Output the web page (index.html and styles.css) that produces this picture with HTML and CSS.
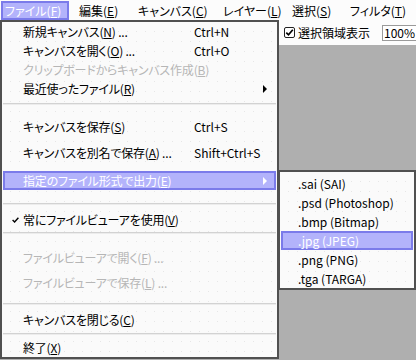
FILE: index.html
```html
<!DOCTYPE html>
<html lang="ja">
<head>
<meta charset="utf-8">
<title>SAI File Menu</title>
<link rel="stylesheet" href="styles.css">
</head>
<body>
<div class="app">
  <nav class="menubar">
    <span class="mb-item active">ファイル(<u>F</u>)</span>
    <span class="mb-item">編集(<u>E</u>)</span>
    <span class="mb-item">キャンバス(<u>C</u>)</span>
    <span class="mb-item">レイヤー(<u>L</u>)</span>
    <span class="mb-item">選択(<u>S</u>)</span>
    <span class="mb-item">フィルタ(<u>T</u>)</span>
  </nav>
  <div class="toolbar">
    <label class="chk"><span class="chk-box"><svg viewBox="0 0 11 11" width="11" height="11"><path d="M2.3 5.6 L4.5 7.8 L8.8 2.8" fill="none" stroke="#000" stroke-width="1.7"/></svg></span>選択領域表示</label>
    <div class="zoom-box">100%</div>
  </div>
  <div class="canvas"></div>

  <div class="menu main-menu">
    <div class="mi"><span class="mark"></span><span class="label">新規キャンバス(<u>N</u>) ...</span><span class="key">Ctrl+N</span><span></span></div>
    <div class="mi"><span class="mark"></span><span class="label">キャンバスを開く(<u>O</u>) ...</span><span class="key">Ctrl+O</span><span></span></div>
    <div class="mi disabled"><span class="mark"></span><span class="label">クリップボードからキャンバス作成(<u>B</u>)</span><span class="key"></span><span></span></div>
    <div class="mi"><span class="mark"></span><span class="label">最近使ったファイル(<u>R</u>)</span><span class="key"></span><span class="arrow"></span></div>
    <div class="sep mt5"></div>
    <div class="mi tall mt9"><span class="mark"></span><span class="label">キャンバスを保存(<u>S</u>)</span><span class="key">Ctrl+S</span><span></span></div>
    <div class="mi tall"><span class="mark"></span><span class="label">キャンバスを別名で保存(<u>A</u>) ...</span><span class="key">Shift+Ctrl+S</span><span></span></div>
    <div class="mi hl mt5"><span class="mark"></span><span class="label">指定のファイル形式で出力(<u>E</u>)</span><span class="key"></span><span class="arrow"></span></div>
    <div class="sep mt13"></div>
    <div class="mi mt5"><span class="mark"><svg class="check" viewBox="0 0 7 6" width="7" height="6"><path d="M0.6 3 L2.6 5 L6.4 0.8" fill="none" stroke="#000" stroke-width="1.4"/></svg></span><span class="label">常にファイルビューアを使用(<u>V</u>)</span><span class="key"></span><span></span></div>
    <div class="sep mt3"></div>
    <div class="mi mid mt11 disabled"><span class="mark"></span><span class="label">ファイルビューアで開く(<u>F</u>) ...</span><span class="key"></span><span></span></div>
    <div class="mi mid disabled"><span class="mark"></span><span class="label">ファイルビューアで保存(<u>L</u>) ...</span><span class="key"></span><span></span></div>
    <div class="sep mt8"></div>
    <div class="mi mt5"><span class="mark"></span><span class="label">キャンバスを閉じる(<u>C</u>)</span><span class="key"></span><span></span></div>
    <div class="sep mt4"></div>
    <div class="mi mt3"><span class="mark"></span><span class="label">終了(<u>X</u>)</span><span class="key"></span><span></span></div>
  </div>

  <div class="menu sub-menu">
    <div class="si">.sai (SAI)</div>
    <div class="si">.psd (Photoshop)</div>
    <div class="si">.bmp (Bitmap)</div>
    <div class="si hl">.jpg (JPEG)</div>
    <div class="si">.png (PNG)</div>
    <div class="si">.tga (TARGA)</div>
  </div>
</div>
</body>
</html>
```
FILE: styles.css
```css
* { box-sizing: border-box; }
html, body { margin: 0; padding: 0; }
body {
  width: 416px;
  height: 360px;
  overflow: hidden;
  background: #afafaf;
  color: #000;
  font-family: "Noto Sans CJK JP", "Noto Sans", sans-serif;
  font-size: 12px;
  line-height: 1;
  font-feature-settings: "palt";
}
u { text-decoration-thickness: 1px; text-underline-offset: 1px; }

.app {
  position: relative;
  width: 416px;
  height: 360px;
  display: flex;
  flex-direction: column;
}

/* menubar */
.menubar {
  height: 20px;
  flex: none;
  display: flex;
  background: #fcfcfc;
  padding-left: 1px;
}
.mb-item {
  display: flex;
  align-items: center;
  height: 19px;
  margin-top: 1px;
  padding: 0 2px;
  border: 2px solid transparent;
  white-space: nowrap;
}
.mb-item:nth-child(1) { width: 68px; margin-right: 6px; }
.mb-item:nth-child(2) { width: 59px; }
.mb-item:nth-child(3) { width: 85px; }
.mb-item:nth-child(4) { width: 69px; }
.mb-item:nth-child(5) { width: 58px; }
.mb-item:nth-child(6) { width: 70px; }
.mb-item.active {
  background: #b3b3fb;
  border-color: #7b7bea;
  color: #fff;
}

/* toolbar */
.toolbar {
  height: 25px;
  flex: none;
  display: flex;
  align-items: center;
  padding-left: 284px;
  background: #fcfcfc;
  white-space: nowrap;
}
.chk {
  display: flex;
  align-items: center;
  gap: 3px;
}
.chk-box {
  width: 11px;
  height: 11px;
  border: 1px solid #222;
  border-radius: 2px;
  background: #fff;
  display: flex;
}
.chk-box svg { display: block; margin: -1px; }
.zoom-box {
  margin-left: 12px;
  width: 50px;
  height: 16px;
  flex: none;
  border: 1px solid #9a9a9a;
  background: #fff;
  padding-left: 1px;
  display: flex;
  align-items: center;
}

.canvas { flex: 1; background: #afafaf; }

/* menus */
.menu {
  position: absolute;
  display: flex;
  flex-direction: column;
  border: 2px solid #505050;
  background-color: #fafafa;
  background-image:
    linear-gradient(90deg, #fafafa 8px, transparent 8px),
    linear-gradient(#fafafa 9px, #e6e6e6 9px);
  background-size: 9px 10px;
}
.main-menu { left: 0; top: 20px; width: 279px; height: 339px; }
.sub-menu { left: 278px; top: 170px; width: 138px; height: 120px; padding-top: 2px; }

.mi {
  display: grid;
  grid-template-columns: 18px 171px 1fr 16px;
  align-items: center;
  flex: none;
  height: 19px;
  margin: 0 1px;
  border: 2px solid transparent;
  white-space: nowrap;
}
.mi.tall { height: 26px; }
.mi.mid { height: 25px; }
.mi.disabled { color: #b6b6b6; }
.mark { display: flex; align-items: center; }
.check { display: block; margin-left: 7px; }
.label { overflow: visible; letter-spacing: -0.2px; }
.arrow {
  justify-self: start;
  margin-left: 5px;
  width: 0;
  height: 0;
  border-left: 4px solid currentColor;
  border-top: 4px solid transparent;
  border-bottom: 4px solid transparent;
}

.si {
  display: flex;
  align-items: center;
  flex: none;
  height: 19px;
  margin: 0 1px;
  padding-left: 15px;
  border: 2px solid transparent;
  white-space: nowrap;
}

.hl {
  background: #b3b3fb;
  border-color: #7b7bea;
  color: #fff;
}

.sep {
  flex: none;
  height: 2px;
  margin-left: 1px;
  margin-right: 1px;
  border-top: 1px solid #d2d2d2;
  border-bottom: 1px solid #ececec;
}
.mt3 { margin-top: 3px; }
.mt4 { margin-top: 4px; }
.mt5 { margin-top: 5px; }
.mt8 { margin-top: 8px; }
.mt9 { margin-top: 9px; }
.mt11 { margin-top: 11px; }
.mt13 { margin-top: 13px; }
```
